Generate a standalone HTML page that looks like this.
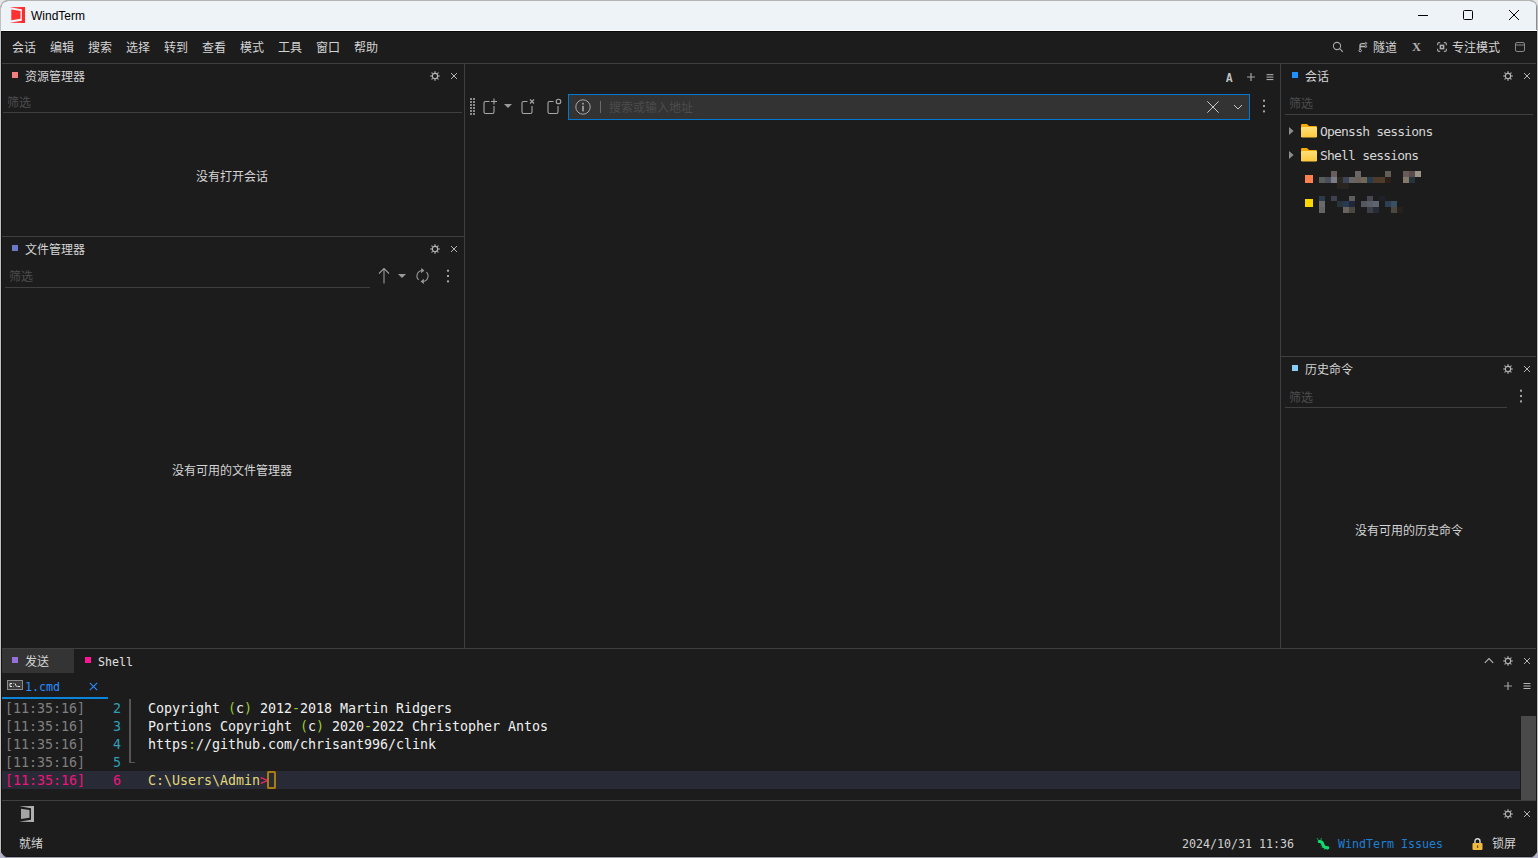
<!DOCTYPE html>
<html lang="zh-CN">
<head>
<meta charset="utf-8">
<title>WindTerm</title>
<style>
html,body{margin:0;padding:0;width:1538px;height:858px;overflow:hidden;background:linear-gradient(#e6e6e6,#e6e6e6 50%,#b4b4d0 50%,#b4b4d0);}
body{font-family:"Liberation Sans","Noto Sans CJK SC",sans-serif;font-size:12px;color:#d4d4d4;}
#win{position:absolute;left:0;top:0;width:1536px;height:856px;border:1px solid;border-color:#b4b4b4 #c0c0c0 #9c9cac #c0c0c0;border-radius:8px;background:#1c1c1c;overflow:hidden;}
#win *{position:absolute;box-sizing:border-box;white-space:nowrap;}
.t{line-height:16px;height:16px;}
.mono{font-family:"DejaVu Sans Mono","Liberation Mono","Noto Sans CJK SC",monospace;font-size:13.33px;letter-spacing:-0.025px;}
.hl{height:1px;background:#3f3f3f;}
.vl{width:1px;background:#3f3f3f;}
.dim{color:#4d4d4d;}
.tr{font-size:11.67px;}
.ts{color:#808080;}
.ln{color:#2f9fb5;}
.tx{color:#f0f0f0;}
.tx i{font-style:normal;color:#9acd32;position:static !important;}
.tx b{font-weight:normal;color:#f92672;position:static !important;}
svg{overflow:visible;}
</style>
</head>
<body>
<div id="win">
<!-- coordinates inside #win are offset by -1,-1 from page -->
<div id="titlebar" style="left:0;top:0;width:1536px;height:30px;background:#eef3f7;"></div>
<div id="content" style="left:-1px;top:-1px;width:1538px;height:858px;">
<!-- TITLE BAR -->
<svg style="left:9px;top:7px;width:16px;height:16px;" viewBox="0 0 16 16"><path d="M0.6 0.3L16 0V16L0.6 15.7L12.9 13.8V2.3Z" fill="#ff2b2b"/><path d="M2.3 2.6L11.5 4.1V11.8L2.3 13.2Z" fill="#ff3131"/></svg>
<div class="t" style="left:31px;top:8px;color:#000;font-size:12px;">WindTerm</div>
<svg style="left:1418px;top:15px;width:10px;height:1px;"><rect width="10" height="1" fill="#000"/></svg>
<svg style="left:1463px;top:10px;width:10px;height:10px;" viewBox="0 0 10 10"><rect x="0.5" y="0.5" width="9" height="9" rx="1" fill="none" stroke="#000" stroke-width="1"/></svg>
<svg style="left:1509px;top:10px;width:10px;height:10px;" viewBox="0 0 10 10"><path d="M0 0L10 10M10 0L0 10" stroke="#000" stroke-width="1" fill="none"/></svg>
<!-- MENU BAR -->
<div class="t" style="left:12px;top:40px;">会话</div>
<div class="t" style="left:50px;top:40px;">编辑</div>
<div class="t" style="left:88px;top:40px;">搜索</div>
<div class="t" style="left:126px;top:40px;">选择</div>
<div class="t" style="left:164px;top:40px;">转到</div>
<div class="t" style="left:202px;top:40px;">查看</div>
<div class="t" style="left:240px;top:40px;">模式</div>
<div class="t" style="left:278px;top:40px;">工具</div>
<div class="t" style="left:316px;top:40px;">窗口</div>
<div class="t" style="left:354px;top:40px;">帮助</div>
<svg style="left:1332px;top:41px;width:12px;height:12px;" viewBox="0 0 12 12"><circle cx="5" cy="5" r="3.6" fill="none" stroke="#a8a8a8" stroke-width="1.1"/><path d="M7.7 7.7L10.8 10.8" stroke="#a8a8a8" stroke-width="1.2"/></svg>
<svg style="left:1358px;top:42px;width:10px;height:11px;" viewBox="0 0 10 11"><path d="M2 7.2V3.6Q2 1.6 4 1.6H7M2 4.5H7" fill="none" stroke="#b8b8b8" stroke-width="1.3"/><circle cx="2.2" cy="8.6" r="1.2" fill="none" stroke="#b8b8b8" stroke-width="1"/><circle cx="7.8" cy="1.4" r="0.9" fill="none" stroke="#b8b8b8" stroke-width="0.9"/><circle cx="7.8" cy="4.5" r="0.9" fill="none" stroke="#b8b8b8" stroke-width="0.9"/></svg>
<div class="t" style="left:1373px;top:40px;">隧道</div>
<div class="t" style="left:1412px;top:39px;font-family:'Liberation Serif',serif;font-weight:bold;font-size:12.5px;color:#b0b0b0;">X</div>
<svg style="left:1437px;top:42px;width:10px;height:10px;" viewBox="0 0 10 10"><path d="M0.6 3.2V2Q0.6 0.6 2 0.6H3.2M6.8 0.6H8Q9.4 0.6 9.4 2V3.2M9.4 6.8V8Q9.4 9.4 8 9.4H6.8M3.2 9.4H2Q0.6 9.4 0.6 8V6.8" fill="none" stroke="#a0a0a0" stroke-width="1.2"/><rect x="3.4" y="3.4" width="3.2" height="3.2" fill="none" stroke="#b0b0b0" stroke-width="1.5"/></svg>
<div class="t" style="left:1452px;top:40px;">专注模式</div>
<svg style="left:1515px;top:42px;width:10px;height:10px;" viewBox="0 0 10 10"><rect x="0.5" y="0.5" width="9" height="9" rx="1.5" fill="none" stroke="#8a8a8a" stroke-width="1"/><path d="M0.5 3H9.5" stroke="#8a8a8a" stroke-width="1.2"/></svg>
<div class="hl" style="left:1px;top:63px;width:1536px;"></div>
<svg style="left:0;top:0;width:0;height:0;"><defs>
<symbol id="gear" viewBox="0 0 10 10"><path d="M5 0.2V2.2M5 7.8V9.8M0.2 5H2.2M7.8 5H9.8" stroke="#8c8c8c" stroke-width="1.6"/><path d="M1.5 1.5L3 3M7 7L8.5 8.5M8.5 1.5L7 3M3 7L1.5 8.5" stroke="#8c8c8c" stroke-width="1.2"/><circle cx="5" cy="5" r="2.65" fill="none" stroke="#b8b8b8" stroke-width="1.05"/></symbol>
<symbol id="xx" viewBox="0 0 8 8"><path d="M1 1L7 7M7 1L1 7" stroke="#b4b4b4" stroke-width="1"/></symbol>
<symbol id="dots3" viewBox="0 0 2 14"><rect x="0" y="0.7" width="2" height="2" fill="#a4a4a4"/><rect x="0" y="6" width="2" height="2" fill="#a4a4a4"/><rect x="0" y="11.4" width="2" height="2" fill="#a4a4a4"/></symbol>
</defs></svg>
<!-- LEFT: resource manager -->
<div style="left:12px;top:72px;width:6px;height:6px;background:#f08080;"></div>
<div class="t" style="left:25px;top:69px;">资源管理器</div>
<svg style="left:430px;top:71px;width:10px;height:10px;"><use href="#gear"/></svg>
<svg style="left:450px;top:72px;width:8px;height:8px;"><use href="#xx"/></svg>
<div class="t dim" style="left:7px;top:95px;">筛选</div>
<div class="hl" style="left:3px;top:112px;width:459px;"></div>
<div class="t" style="left:132px;top:169px;width:200px;text-align:center;">没有打开会话</div>
<div class="hl" style="left:1px;top:236px;width:463px;"></div>
<div class="vl" style="left:464px;top:64px;height:584px;"></div>
<!-- LEFT: file manager -->
<div style="left:12px;top:245px;width:6px;height:6px;background:#6a78c8;"></div>
<div class="t" style="left:25px;top:242px;">文件管理器</div>
<svg style="left:430px;top:244px;width:10px;height:10px;"><use href="#gear"/></svg>
<svg style="left:450px;top:245px;width:8px;height:8px;"><use href="#xx"/></svg>
<div class="t dim" style="left:9px;top:269px;">筛选</div>
<div class="hl" style="left:5px;top:287px;width:365px;"></div>
<svg style="left:378px;top:268px;width:12px;height:16px;" viewBox="0 0 12 16"><path d="M6 0.5V15.5M1 5.5L6 0.5L11 5.5" fill="none" stroke="#9a9a9a" stroke-width="1.1"/></svg>
<svg style="left:398px;top:274px;width:8px;height:4px;" viewBox="0 0 8 4"><path d="M0 0H8L4 4Z" fill="#9a9a9a"/></svg>
<svg style="left:416px;top:268px;width:13px;height:16px;" viewBox="0 0 13 16"><path d="M6.5 2.5A5.5 5.5 0 0 0 2.6 11.9" fill="none" stroke="#9a9a9a" stroke-width="1.1"/><path d="M6.5 13.5A5.5 5.5 0 0 0 10.4 4.1" fill="none" stroke="#9a9a9a" stroke-width="1.1"/><path d="M5.2 0L8.4 2.6L5.2 5.2Z" fill="#9a9a9a"/><path d="M7.8 10.8L4.6 13.4L7.8 16Z" fill="#9a9a9a"/></svg>
<svg style="left:447px;top:269px;width:2px;height:14px;"><use href="#dots3"/></svg>
<div class="t" style="left:132px;top:463px;width:200px;text-align:center;">没有可用的文件管理器</div>
<!-- CENTER: tab bar + toolbar -->
<div class="t" style="left:1226px;top:71px;font-family:'Liberation Mono',monospace;font-weight:bold;font-size:12px;color:#c4c4c4;transform:scaleX(0.9);transform-origin:0 0;">A</div>
<svg style="left:1247px;top:73px;width:8px;height:8px;" viewBox="0 0 8 8"><path d="M4 0V8M0 4H8" stroke="#a4a4a4" stroke-width="1.2"/></svg>
<svg style="left:1266px;top:73px;width:8px;height:8px;" viewBox="0 0 8 8"><path d="M0.5 1.7H7.4M0.5 4.1H7.4M0.5 6.6H7.4" stroke="#b8b8b8" stroke-width="1"/></svg>
<svg style="left:470px;top:98px;width:5px;height:17px;" viewBox="0 0 5 17"><g fill="#8a8a8a"><rect x="0" y="0" width="2" height="2"/><rect x="3" y="0" width="2" height="2"/><rect x="0" y="3" width="2" height="2"/><rect x="3" y="3" width="2" height="2"/><rect x="0" y="6" width="2" height="2"/><rect x="3" y="6" width="2" height="2"/><rect x="0" y="9" width="2" height="2"/><rect x="3" y="9" width="2" height="2"/><rect x="0" y="12" width="2" height="2"/><rect x="3" y="12" width="2" height="2"/><rect x="0" y="15" width="2" height="2"/><rect x="3" y="15" width="2" height="2"/></g></svg>
<svg style="left:483px;top:98px;width:15px;height:17px;" viewBox="0 0 15 17"><path d="M6.5 3.5H2.5Q1 3.5 1 5V14Q1 15.5 2.5 15.5H9.5Q11 15.5 11 14V8" fill="none" stroke="#a8a8a8" stroke-width="1.1"/><path d="M11 0.5V6.5M8 3.5H14" stroke="#a8a8a8" stroke-width="1.1"/></svg>
<svg style="left:504px;top:104px;width:8px;height:4px;" viewBox="0 0 8 4"><path d="M0 0H8L4 4Z" fill="#9a9a9a"/></svg>
<svg style="left:521px;top:98px;width:15px;height:17px;" viewBox="0 0 15 17"><path d="M6.5 3.5H2.5Q1 3.5 1 5V14Q1 15.5 2.5 15.5H9.5Q11 15.5 11 14V8" fill="none" stroke="#a8a8a8" stroke-width="1.1"/><path d="M9 1.5L13 5.5M13 1.5L9 5.5" stroke="#a8a8a8" stroke-width="1.1"/></svg>
<svg style="left:547px;top:98px;width:15px;height:17px;" viewBox="0 0 15 17"><path d="M6.5 3.5H2.5Q1 3.5 1 5V14Q1 15.5 2.5 15.5H9.5Q11 15.5 11 14V8" fill="none" stroke="#a8a8a8" stroke-width="1.1"/><circle cx="11.5" cy="3.5" r="2.3" fill="none" stroke="#a8a8a8" stroke-width="1.1"/></svg>
<div style="left:568px;top:94px;width:682px;height:26px;background:#333333;border:1px solid #0078d4;"></div>
<svg style="left:575px;top:99px;width:16px;height:16px;" viewBox="0 0 16 16"><circle cx="8" cy="8" r="7.2" fill="none" stroke="#a8a8a8" stroke-width="1"/><rect x="7.2" y="6.8" width="1.6" height="5.6" fill="#a8a8a8"/><rect x="7.2" y="3.8" width="1.6" height="1.7" fill="#a8a8a8"/></svg>
<div style="left:600px;top:101px;width:1px;height:12px;background:#6a6a6a;"></div>
<div class="t" style="left:609px;top:100px;color:#4c4c4c;">搜索或输入地址</div>
<svg style="left:1207px;top:101px;width:12px;height:12px;" viewBox="0 0 12 12"><path d="M0.3 0.3L11.7 11.7M11.7 0.3L0.3 11.7" stroke="#c8c8c8" stroke-width="1"/></svg>
<svg style="left:1233px;top:104px;width:10px;height:6px;" viewBox="0 0 10 6"><path d="M1 1L5 5L9 1" fill="none" stroke="#c8c8c8" stroke-width="1"/></svg>
<svg style="left:1263px;top:99px;width:2px;height:14px;"><use href="#dots3"/></svg>
<div class="vl" style="left:1280px;top:64px;height:584px;"></div>
<div class="hl" style="left:1px;top:648px;width:1536px;"></div>
<!-- RIGHT: sessions -->
<div style="left:1292px;top:72px;width:6px;height:6px;background:#1e90ff;"></div>
<div class="t" style="left:1305px;top:69px;">会话</div>
<svg style="left:1503px;top:71px;width:10px;height:10px;"><use href="#gear"/></svg>
<svg style="left:1523px;top:72px;width:8px;height:8px;"><use href="#xx"/></svg>
<div class="t dim" style="left:1289px;top:96px;">筛选</div>
<div class="hl" style="left:1285px;top:114px;width:248px;"></div>
<svg style="left:1289px;top:127px;width:5px;height:8px;" viewBox="0 0 5 8"><path d="M0 0L4.6 4L0 8Z" fill="#8c8c8c"/></svg>
<svg style="left:1301px;top:124px;width:16px;height:14px;" viewBox="0 0 16 14"><defs><linearGradient id="fg" x1="0" y1="0" x2="0" y2="1"><stop offset="0" stop-color="#ffe07a"/><stop offset="1" stop-color="#ffc93c"/></linearGradient></defs><path d="M1.2 0H6L8 2H14.8Q16 2 16 3.2V6H0V1.2Q0 0 1.2 0Z" fill="#f5ab00"/><path d="M0 4.2Q0 3 1.2 3H14.8Q16 3 16 4.2V12.3Q16 13.5 14.8 13.5H1.2Q0 13.5 0 12.3Z" fill="url(#fg)"/></svg>
<div class="t mono" style="left:1320px;top:124px;font-size:13px;letter-spacing:-0.8px;color:#d6d6d6;">Openssh sessions</div>
<svg style="left:1289px;top:151px;width:5px;height:8px;" viewBox="0 0 5 8"><path d="M0 0L4.6 4L0 8Z" fill="#8c8c8c"/></svg>
<svg style="left:1301px;top:148px;width:16px;height:14px;" viewBox="0 0 16 14"><path d="M1.2 0H6L8 2H14.8Q16 2 16 3.2V6H0V1.2Q0 0 1.2 0Z" fill="#f5ab00"/><path d="M0 4.2Q0 3 1.2 3H14.8Q16 3 16 4.2V12.3Q16 13.5 14.8 13.5H1.2Q0 13.5 0 12.3Z" fill="url(#fg)"/></svg>
<div class="t mono" style="left:1320px;top:148px;font-size:13px;letter-spacing:-0.8px;color:#d6d6d6;">Shell sessions</div>
<div style="left:1305px;top:175px;width:8px;height:8px;background:#ff7f50;"></div>
<div style="left:1305px;top:199px;width:8px;height:8px;background:#ffd700;"></div>
<div style="left:1331px;top:171px;width:6px;height:6px;background:#6a5d5d;"></div>
<div style="left:1355px;top:171px;width:6px;height:6px;background:#6a6666;"></div>
<div style="left:1385px;top:171px;width:6px;height:6px;background:#625e56;"></div>
<div style="left:1403px;top:171px;width:6px;height:6px;background:#675c5c;"></div>
<div style="left:1409px;top:171px;width:6px;height:6px;background:#5a4c4c;"></div>
<div style="left:1415px;top:171px;width:6px;height:6px;background:#9a9488;"></div>
<div style="left:1319px;top:177px;width:6px;height:6px;background:#5a5c5a;"></div>
<div style="left:1325px;top:177px;width:6px;height:6px;background:#4a4e5c;"></div>
<div style="left:1331px;top:177px;width:6px;height:6px;background:#7a7c88;"></div>
<div style="left:1337px;top:177px;width:6px;height:6px;background:#2e2822;"></div>
<div style="left:1343px;top:177px;width:6px;height:6px;background:#3a4658;"></div>
<div style="left:1349px;top:177px;width:6px;height:6px;background:#666666;"></div>
<div style="left:1355px;top:177px;width:6px;height:6px;background:#6a6258;"></div>
<div style="left:1361px;top:177px;width:6px;height:6px;background:#726858;"></div>
<div style="left:1367px;top:177px;width:6px;height:6px;background:#263a50;"></div>
<div style="left:1373px;top:177px;width:6px;height:6px;background:#4e3a26;"></div>
<div style="left:1379px;top:177px;width:6px;height:6px;background:#4e3c2a;"></div>
<div style="left:1385px;top:177px;width:6px;height:6px;background:#2e1e1a;"></div>
<div style="left:1403px;top:177px;width:6px;height:6px;background:#857a68;"></div>
<div style="left:1409px;top:177px;width:6px;height:6px;background:#24343e;"></div>
<div style="left:1337px;top:183px;width:6px;height:6px;background:#2a2420;"></div>
<div style="left:1343px;top:183px;width:6px;height:6px;background:#2a2420;"></div>
<div style="left:1319px;top:196px;width:6px;height:5px;background:#2c3a4e;"></div>
<div style="left:1331px;top:196px;width:6px;height:5px;background:#3c4050;"></div>
<div style="left:1349px;top:196px;width:6px;height:5px;background:#5e5c5c;"></div>
<div style="left:1367px;top:196px;width:6px;height:5px;background:#484650;"></div>
<div style="left:1379px;top:196px;width:6px;height:5px;background:#1e2228;"></div>
<div style="left:1319px;top:201px;width:6px;height:6px;background:#6a6a6a;"></div>
<div style="left:1337px;top:201px;width:6px;height:6px;background:#28343a;"></div>
<div style="left:1343px;top:201px;width:6px;height:6px;background:#283a50;"></div>
<div style="left:1349px;top:201px;width:6px;height:6px;background:#1e283a;"></div>
<div style="left:1361px;top:201px;width:6px;height:6px;background:#565660;"></div>
<div style="left:1367px;top:201px;width:6px;height:6px;background:#5a5e66;"></div>
<div style="left:1373px;top:201px;width:6px;height:6px;background:#5e6470;"></div>
<div style="left:1385px;top:201px;width:6px;height:6px;background:#2e3e54;"></div>
<div style="left:1391px;top:201px;width:6px;height:6px;background:#38505f;"></div>
<div style="left:1319px;top:207px;width:6px;height:6px;background:#666462;"></div>
<div style="left:1343px;top:207px;width:6px;height:6px;background:#6a625e;"></div>
<div style="left:1349px;top:207px;width:6px;height:6px;background:#4a4840;"></div>
<div style="left:1367px;top:207px;width:6px;height:6px;background:#3e3e48;"></div>
<div style="left:1373px;top:207px;width:6px;height:6px;background:#262c36;"></div>
<div style="left:1391px;top:207px;width:6px;height:6px;background:#4c4840;"></div>
<div style="left:1397px;top:207px;width:6px;height:6px;background:#28201c;"></div>
<div class="hl" style="left:1281px;top:356px;width:256px;"></div>
<!-- RIGHT: history -->
<div style="left:1292px;top:365px;width:6px;height:6px;background:#87cefa;"></div>
<div class="t" style="left:1305px;top:362px;">历史命令</div>
<svg style="left:1503px;top:364px;width:10px;height:10px;"><use href="#gear"/></svg>
<svg style="left:1523px;top:365px;width:8px;height:8px;"><use href="#xx"/></svg>
<div class="t dim" style="left:1289px;top:390px;">筛选</div>
<div class="hl" style="left:1285px;top:407px;width:222px;"></div>
<svg style="left:1520px;top:389px;width:2px;height:14px;"><use href="#dots3"/></svg>
<div class="t" style="left:1309px;top:523px;width:200px;text-align:center;">没有可用的历史命令</div>
<!-- BOTTOM PANEL -->
<div style="left:2px;top:649px;width:72px;height:24px;background:#343434;"></div>
<div style="left:12px;top:657px;width:6px;height:6px;background:#9370db;"></div>
<div class="t" style="left:25px;top:654px;">发送</div>
<div style="left:85px;top:657px;width:6px;height:6px;background:#ff1493;"></div>
<div class="t mono tr" style="left:98px;top:654px;color:#e0e0e0;">Shell</div>
<svg style="left:1484px;top:657px;width:10px;height:7px;" viewBox="0 0 10 7"><path d="M0.8 5.8L5 1.5L9.2 5.8" fill="none" stroke="#b4b4b4" stroke-width="1.1"/></svg>
<svg style="left:1503px;top:656px;width:10px;height:10px;"><use href="#gear"/></svg>
<svg style="left:1523px;top:657px;width:8px;height:8px;"><use href="#xx"/></svg>
<svg style="left:7px;top:680px;width:16px;height:10px;" viewBox="0 0 16 10"><rect x="0.5" y="0.5" width="15" height="9" fill="#3c3c3c" stroke="#8a8a8a" stroke-width="1"/><path d="M3 3.5H5M3 3.5V6.5H5M6.5 3.5V4M6.5 6V6.5M8 3.5L9.5 6.5M10.5 6.5H13" fill="none" stroke="#e8e8e8" stroke-width="1"/></svg>
<div class="t mono tr" style="left:25px;top:679px;color:#2a8cff;">1.cmd</div>
<svg style="left:89px;top:682px;width:9px;height:9px;" viewBox="0 0 9 9"><path d="M0.8 0.8L8.2 8.2M8.2 0.8L0.8 8.2" stroke="#2a8cff" stroke-width="1.1"/></svg>
<div style="left:2px;top:697px;width:106px;height:2px;background:#0a84d8;"></div>
<svg style="left:1504px;top:682px;width:8px;height:8px;" viewBox="0 0 8 8"><path d="M4 0V8M0 4H8" stroke="#a0a0a0" stroke-width="1.2"/></svg>
<svg style="left:1523px;top:682px;width:8px;height:8px;" viewBox="0 0 8 8"><path d="M0.5 1.5H7.5M0.5 4H7.5M0.5 6.5H7.5" stroke="#b4b4b4" stroke-width="1"/></svg>
<!-- terminal -->
<div style="left:2px;top:771px;width:1518px;height:18px;background:#282a36;"></div>
<div style="left:129px;top:699px;width:2px;height:64px;background:#555;"></div>
<div style="left:129px;top:762px;width:6px;height:1px;background:#555;"></div>
<div class="t mono ts" style="left:5px;top:701px;">[11:35:16]</div>
<div class="t mono ts" style="left:5px;top:719px;">[11:35:16]</div>
<div class="t mono ts" style="left:5px;top:737px;">[11:35:16]</div>
<div class="t mono ts" style="left:5px;top:755px;">[11:35:16]</div>
<div class="t mono ts" style="left:5px;top:773px;color:#f0147c;">[11:35:16]</div>
<div class="t mono ln" style="left:113px;top:701px;">2</div>
<div class="t mono ln" style="left:113px;top:719px;">3</div>
<div class="t mono ln" style="left:113px;top:737px;">4</div>
<div class="t mono ln" style="left:113px;top:755px;">5</div>
<div class="t mono ln" style="left:113px;top:773px;color:#f0147c;">6</div>
<div class="t mono tx" style="left:148px;top:701px;">Copyright <i>(</i>c<i>)</i> 2012<i>-</i>2018 Martin Ridgers</div>
<div class="t mono tx" style="left:148px;top:719px;">Portions Copyright <i>(</i>c<i>)</i> 2020<i>-</i>2022 Christopher Antos</div>
<div class="t mono tx" style="left:148px;top:737px;">https<i>:</i>//github.com/chrisant996/clink</div>
<div class="t mono tx" style="left:148px;top:773px;color:#e0d878;">C:\Users\Admin<b>&gt;</b></div>
<div style="left:267px;top:771px;width:9px;height:18px;border:2px solid #a87c10;border-radius:1.5px;"></div>
<div style="left:1521px;top:716px;width:15px;height:84px;background:#4a4a4a;"></div>
<div class="hl" style="left:1px;top:800px;width:1536px;"></div>
<!-- STATUS -->
<svg style="left:19px;top:806px;width:15px;height:16px;" viewBox="0 0 15 16"><path d="M0.3 0.3L15 0V16L0.3 15.7L12 13.8V2.3Z" fill="#b0b0b0"/><path d="M2 2.8L10.5 4.1V11.8L2 13Z" fill="#a4a4a4"/></svg>
<svg style="left:1503px;top:809px;width:10px;height:10px;"><use href="#gear"/></svg>
<svg style="left:1523px;top:810px;width:8px;height:8px;"><use href="#xx"/></svg>
<div class="t" style="left:19px;top:836px;">就绪</div>
<div class="t mono tr" style="left:1182px;top:836px;color:#d0d0d0;">2024/10/31 11:36</div>
<svg style="left:1316px;top:837px;width:15px;height:14px;" viewBox="0 0 15 14"><path d="M3.2 4.6Q6 4.2 6.8 7.2Q7.6 11 11.8 10.8" fill="none" stroke="#10dc6c" stroke-width="3" stroke-linecap="round"/><path d="M1 1L3 3.8M5.6 1L4.4 3.6M4.6 8.8L5.6 8M5.6 11L6.6 10M8.8 12.8L9 11M11.6 12.8L11.4 11" stroke="#10c868" stroke-width="0.8" fill="none"/></svg>
<div class="t mono tr" style="left:1338px;top:836px;color:#1e7fd6;">WindTerm Issues</div>
<svg style="left:1472px;top:838px;width:11px;height:12px;" viewBox="0 0 11 12"><path d="M3 5.5V3.2Q3 0.8 5.5 0.8Q8 0.8 8 3.2V5.5" fill="none" stroke="#d8d8d8" stroke-width="1.4"/><rect x="0.5" y="5" width="10" height="7" rx="1" fill="#f0b93f"/><rect x="5" y="7.3" width="1.2" height="2.6" fill="#6a4a10"/></svg>
<div class="t" style="left:1492px;top:836px;">锁屏</div>
<div style="left:1536px;top:31px;width:1px;height:826px;background:#151515;"></div>
<div style="left:1536px;top:1px;width:1px;height:30px;background:#8a8c90;"></div>
<div style="left:1px;top:856px;width:1536px;height:1px;background:#151515;"></div>
<div style="left:1px;top:30px;width:1536px;height:1px;background:#fdfefe;"></div>
<div style="left:1px;top:31px;width:1536px;height:1px;background:#0a0a0a;"></div>
<div style="left:1px;top:31px;width:1px;height:826px;background:#131313;"></div>
<!--CONTENT-->
</div>
</div>
</body>
</html>
